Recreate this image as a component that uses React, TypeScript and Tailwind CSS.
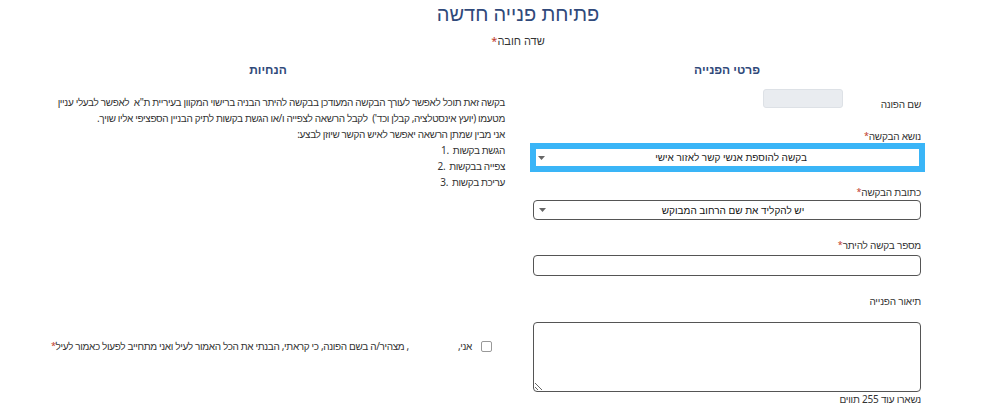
import React from 'react';

const Star = () => <span className="text-[#c0392b] text-[9px] align-top">*</span>;

const Arrow = () => (
  <svg width="7" height="4" viewBox="0 0 7 4" className="shrink-0">
    <path d="M0 0 L7 0 L3.5 4 Z" fill="#666" />
  </svg>
);

const Label: React.FC<{ text: string; required?: boolean; className?: string }> = ({ text, required, className }) => (
  <div className={`text-[10px] leading-[14px] tracking-[-0.2px] text-[#333] ${className ?? ''}`}>
    {text}
    {required && <Star />}
  </div>
);

const steps = ['הגשת בקשות', 'צפייה בבקשות', 'עריכת בקשות'];

const App: React.FC = () => {
  return (
    <div dir="rtl" className="w-full h-[416px] bg-white overflow-hidden" style={{ fontFamily: '"Noto Sans", sans-serif' }}>
      <div className="pl-[36px] text-center pt-[1px]">
        <h1 className="text-[20px] leading-[26px] text-[#30497a]">פתיחת פנייה חדשה</h1>
        <div className="mt-[6px] text-[11px] leading-[16px] text-[#333]">
          שדה חובה<span className="text-[#c0392b]">*</span>
        </div>
      </div>

      <div className="flex pr-[79px] gap-[28px] mt-[13px]">
        {/* right column - form */}
        <div className="w-[388px] shrink-0">
          <h2 className="text-center text-[12px] leading-[16px] font-bold text-[#30497a]">פרטי הפנייה</h2>

          <div className="flex items-start mt-[11px]">
            <Label text="שם הפונה" className="w-[78px] mt-[8px]" />
            <div className="w-[80px] h-[19px] rounded-[3px] bg-[#e9ecf0] border border-[#dde1e6]" />
          </div>

          <Label text="נושא הבקשה" required className="mt-[18px]" />
          <div className="mr-[-4px] ml-[-3px] border-[6px] border-[#3ab5f7]">
            <div className="h-[17px] bg-white flex items-center px-[2px]">
              <span className="flex-1 text-center text-[10px] text-[#222]">בקשה להוספת אנשי קשר לאזור אישי</span>
              <Arrow />
            </div>
          </div>

          <Label text="כתובת הבקשה" required className="mt-[13px]" />
          <div className="mt-[1px] h-[20px] rounded-[4px] border border-[#555] flex items-center pl-[5px]">
            <span className="flex-1 text-center text-[10px] font-medium text-[#111]">יש להקליד את שם הרחוב המבוקש</span>
            <Arrow />
          </div>

          <Label text="מספר בקשה להיתר" required className="mt-[18px]" />
          <div className="mt-[3px] h-[21px] rounded-[4px] border border-[#555]" />

          <Label text="תיאור הפנייה" className="mt-[18px]" />
          <textarea dir="rtl" className="mt-[14px] block w-full h-[70px] rounded-[4px] border border-[#555] outline-none" />
          <Label text="נשארו עוד 255 תווים" />
        </div>

        {/* left column - instructions */}
        <div className="w-[474px] shrink-0">
          <h2 className="text-center text-[12px] leading-[16px] font-bold text-[#30497a]">הנחיות</h2>
          <div className="mt-[16px] text-[10px] leading-[16px] tracking-[-0.35px] text-[#333] whitespace-nowrap">
            <div>בקשה זאת תוכל לאפשר לעורך הבקשה המעודכן בבקשה להיתר הבניה ברישוי המקוון בעיריית ת"א&nbsp; לאפשר לבעלי עניין</div>
            <div>מטעמו (יועץ אינסטלציה, קבלן וכד')&nbsp; לקבל הרשאה לצפייה ו/או הגשת בקשות לתיק הבניין הספציפי אליו שויך.</div>
            <div>אני מבין שמתן הרשאה יאפשר לאיש הקשר שיוזן לבצע:</div>
            {steps.map((s, i) => (
              <div key={s} className="flex gap-[4px]">
                <span>{s}</span>
                <span dir="ltr">{i + 1}.</span>
              </div>
            ))}
          </div>

          <div className="mt-[149px] h-[14px] flex items-center pr-[13px] text-[10px] leading-[14px] tracking-[-0.35px] text-[#333] whitespace-nowrap">
            <span className="w-[11px] h-[11px] rounded-[2px] border border-[#999] bg-white shrink-0" />
            <span className="mr-[9px]">אני,</span>
            <span className="w-[49px] shrink-0" />
            <span>, מצהיר/ה בשם הפונה, כי קראתי, הבנתי את הכל האמור לעיל ואני מתחייב לפעול כאמור לעיל<Star /></span>
          </div>
        </div>
      </div>
    </div>
  );
};

export default App;
